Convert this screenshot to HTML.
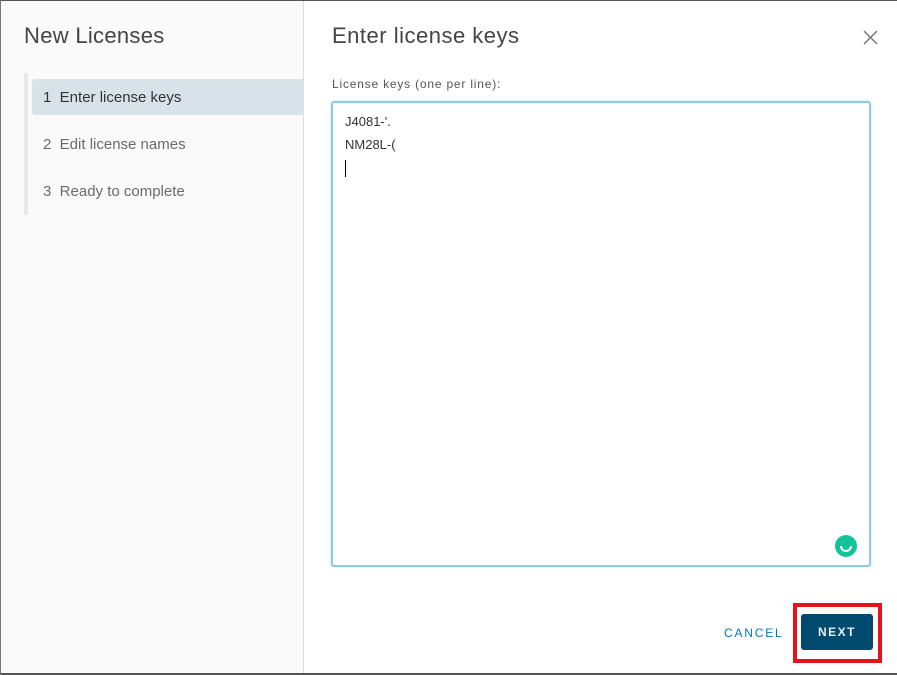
<!DOCTYPE html>
<html><head><style>
*{margin:0;padding:0;box-sizing:border-box}
body{width:897px;height:675px;overflow:hidden;background:#fff;font-family:"Liberation Sans",sans-serif;position:relative}
.frame{position:absolute;left:0;top:0;width:897px;height:675px;border-top:1px solid #555;border-left:1px solid #777;border-bottom:2px solid #555}
.left{position:absolute;left:1px;top:1px;width:303px;height:672px;background:#fafafa;border-right:1px solid #ddd}
.t{position:absolute;white-space:nowrap}
</style></head><body>
<div class="frame"></div>
<div class="left"></div>
<div class="t" style="left:24px;top:23px;font-size:22px;color:#444;letter-spacing:0.3px">New Licenses</div>
<div style="position:absolute;left:24px;top:73px;width:4px;height:142px;background:#e8e8e8"></div>
<div style="position:absolute;left:32px;top:79px;width:272px;height:36px;background:#d8e3e9;border-radius:3px 0 0 3px"></div>
<div class="t" style="left:43px;top:89px;font-size:15px;color:#333">1&nbsp; Enter license keys</div>
<div class="t" style="left:43px;top:136px;font-size:15px;color:#6a6a6a">2&nbsp; Edit license names</div>
<div class="t" style="left:43px;top:183px;font-size:15px;color:#6a6a6a">3&nbsp; Ready to complete</div>
<div class="t" style="left:332px;top:23px;font-size:22px;color:#444;letter-spacing:0.5px">Enter license keys</div>
<svg style="position:absolute;left:863px;top:30px" width="15" height="15"><path d="M1 1L14 14M14 1L1 14" stroke="#777" stroke-width="1.5"/></svg>
<div class="t" style="left:332px;top:77px;font-size:12px;color:#555;letter-spacing:0.8px">License keys (one per line):</div>
<div style="position:absolute;left:331px;top:101px;width:540px;height:466px;border:2px solid #8ccbe6;border-radius:3px;box-shadow:0 0 2px #b9def0"></div>
<div class="t" style="left:345px;top:114px;font-size:13px;color:#333">J4081-'.</div>
<div class="t" style="left:345px;top:137px;font-size:13px;color:#333">NM28L-(</div>
<div style="position:absolute;left:345px;top:160px;width:1px;height:17px;background:#000"></div>
<div style="position:absolute;left:835px;top:535px;width:22px;height:22px;border-radius:50%;background:#15c39a"></div>
<svg style="position:absolute;left:835px;top:535px" width="22" height="22"><path d="M6 11a5 5 0 0 0 10 0" stroke="#fff" stroke-width="2" fill="none"/></svg>
<div class="t" style="left:724px;top:626px;font-size:12px;color:#0079b8;letter-spacing:1.8px">CANCEL</div>
<div style="position:absolute;left:793px;top:603px;width:89px;height:60px;border:4px solid #e8121f"></div>
<div style="position:absolute;left:801px;top:614px;width:72px;height:36px;background:#004a70;border-radius:3px;color:#e8eef2;font-size:12px;font-weight:bold;letter-spacing:1.5px;text-align:center;line-height:36px">NEXT</div>
</body></html>
